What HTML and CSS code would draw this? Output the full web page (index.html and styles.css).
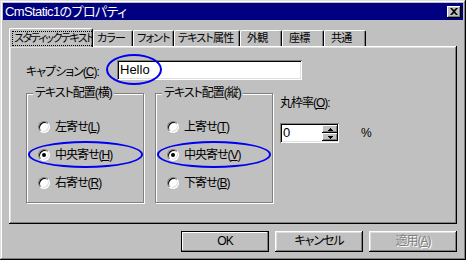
FILE: index.html
```html
<!DOCTYPE html>
<html lang="ja">
<head>
    <meta charset="UTF-8">
    <title>CmStatic1のプロパティ</title>
    <link rel="stylesheet" href="styles.css">
</head>
<body>
    <div class="window">
        <!-- タイトルバー -->
        <div class="titlebar">
            <span class="title">CmStatic1のプロパティ</span>
            <span class="close">
                <svg width="8" height="7" viewBox="0 0 8 7"><path d="M0 0h2l2 2 2-2h2L5 3.5 8 7H6L4 5 2 7H0l3-3.5z" fill="#000"/></svg>
            </span>
        </div>

        <div class="content">
            <div class="tabs">
                <div class="tab active"><span class="focus">スタティックテキスト</span></div>
                <div class="tab w-color">カラー</div>
                <div class="tab w-font">フォント</div>
                <div class="tab w-attr">テキスト属性</div>
                <div class="tab w-2">外観</div>
                <div class="tab w-2">座標</div>
                <div class="tab w-2">共通</div>
            </div>

            <div class="panel">
                <div class="caption-row">
                    <label class="caption-label">キャプション(<u>C</u>):</label>
                    <div class="field caption-field">Hello</div>
                </div>

                <div class="groups">
                    <fieldset class="group">
                        <legend>テキスト配置(横)</legend>
                        <div class="option"><span class="radio"></span>左寄せ(<u>L</u>)</div>
                        <div class="option"><span class="radio checked"></span>中央寄せ(<u>H</u>)</div>
                        <div class="option"><span class="radio"></span>右寄せ(<u>R</u>)</div>
                    </fieldset>
                    <fieldset class="group">
                        <legend>テキスト配置(縦)</legend>
                        <div class="option"><span class="radio"></span>上寄せ(<u>T</u>)</div>
                        <div class="option"><span class="radio checked"></span>中央寄せ(<u>V</u>)</div>
                        <div class="option"><span class="radio"></span>下寄せ(<u>B</u>)</div>
                    </fieldset>
                    <div class="round">
                        <div class="round-label">丸枠率(<u>O</u>):</div>
                        <div class="round-row">
                            <div class="field spin-field">
                                <span class="spin-value">0</span>
                                <span class="spin">
                                    <span class="spin-btn"><svg width="5" height="3" viewBox="0 0 5 3"><path d="M2 0h1v1h1v1h1v1H0V2h1V1h1z" fill="#000"/></svg></span>
                                    <span class="spin-btn"><svg width="5" height="3" viewBox="0 0 5 3"><path d="M0 0h5v1H4v1H3v1H2V2H1V1H0z" fill="#000"/></svg></span>
                                </span>
                            </div>
                            <span class="percent">%</span>
                        </div>
                    </div>
                </div>

                <!-- 青い丸印 -->
                <span class="mark mark-caption"></span>
                <span class="mark mark-h"></span>
                <span class="mark mark-v"></span>
            </div>

            <div class="buttons">
                <div class="btn default">OK</div>
                <div class="btn">キャンセル</div>
                <div class="btn disabled">適用(<u>A</u>)</div>
            </div>
        </div>
    </div>
</body>
</html>
```

FILE: styles.css
```css
body {
    margin: 0;
    background-color: #c0c0c0;
    font-family: "Liberation Sans", "Noto Sans CJK JP", sans-serif;
    font-size: 12px;
    font-feature-settings: "palt";
    letter-spacing: -1px;
    color: #000;
}
u {
    text-decoration-thickness: 1px;
    text-underline-offset: 1px;
}
.window {
    width: 466px;
    height: 260px;
    box-sizing: border-box;
    padding: 3px;
    background-color: #c0c0c0;
    box-shadow: inset -1px -1px #000, inset 1px 1px #dfdfdf, inset -2px -2px #808080, inset 2px 2px #fff;
}
/* タイトルバー */
.titlebar {
    height: 17px;
    background-color: #000080;
    color: #fff;
    display: flex;
    align-items: center;
    justify-content: space-between;
    padding: 0 2px 0 2px;
}
.title {
    font-size: 13px;
    letter-spacing: -0.6px;
    line-height: 17px;
}
.close {
    width: 14px;
    height: 12px;
    background-color: #c0c0c0;
    display: flex;
    align-items: center;
    justify-content: center;
    box-shadow: inset -1px -1px #000, inset 1px 1px #fff, inset -2px -2px #808080;
}
.content {
    padding: 8px 6px 0 6px;
}
/* タブ */
.tabs {
    display: flex;
    align-items: flex-end;
    height: 18px;
}
.tab {
    height: 16px;
    box-sizing: border-box;
    border-top: 1px solid #fff;
    border-left: 1px solid #fff;
    border-right: 1px solid #000;
    border-radius: 2px 2px 0 0;
    box-shadow: inset -1px 0 #808080;
    padding-left: 3px;
    font-size: 11px;
    letter-spacing: -0.8px;
    line-height: 14px;
    white-space: nowrap;
    overflow: hidden;
}
.tab.active {
    width: 84px;
    height: 19px;
    margin-bottom: -1px;
    position: relative;
    z-index: 1;
    background-color: #c0c0c0;
    padding: 2px 0 0 3px;
    letter-spacing: -1.5px;
}
.focus {
    display: inline-block;
    outline: 1px dotted #000;
    padding: 0 2px 0 1px;
    line-height: 13px;
}
.w-color { width: 40px; }
.w-font { width: 41px; }
.w-attr { width: 66px; }
.w-2 { width: 42px; padding-left: 6px; }
.panel {
    position: relative;
    height: 178px;
    box-sizing: border-box;
    padding: 14px 0 0 17px;
    box-shadow: inset -1px -1px #000, inset 1px 1px #fff, inset -2px -2px #808080, inset 2px 2px #dfdfdf;
}
.caption-row {
    display: flex;
    align-items: center;
}
.caption-label {
    width: 91px;
}
.field {
    background-color: #fff;
    box-sizing: border-box;
    box-shadow: inset 1px 1px #808080, inset -1px -1px #fff, inset 2px 2px #000, inset -2px -2px #dfdfdf;
}
.caption-field {
    width: 185px;
    height: 20px;
    line-height: 20px;
    padding-left: 3px;
    font-size: 13px;
    letter-spacing: 0;
}
/* グループ */
.groups {
    display: flex;
    margin-top: 6px;
}
.group {
    width: 118px;
    height: 117px;
    box-sizing: border-box;
    margin: 0 11px 0 0;
    padding: 0;
    border: 1px solid #808080;
    box-shadow: inset 1px 1px #fff, 1px 1px #fff;
}
.group legend {
    padding: 0 2px;
    margin-left: 6px;
    line-height: 14px;
    background-color: #c0c0c0;
}
.option {
    display: flex;
    align-items: center;
    height: 28px;
    padding-left: 11px;
    line-height: 14px;
}
.option:first-of-type {
    margin-top: 13px;
}
.radio {
    width: 12px;
    height: 12px;
    box-sizing: border-box;
    border-radius: 50%;
    background-color: #fff;
    border: 1px solid;
    border-color: #808080 #fff #fff #808080;
    box-shadow: inset 1px 1px #000, inset -1px -1px #dfdfdf;
    margin-right: 5px;
    display: flex;
    align-items: center;
    justify-content: center;
}
.radio.checked::after {
    content: "";
    width: 4px;
    height: 4px;
    border-radius: 50%;
    background-color: #000;
}
/* 丸枠率 */
.round {
    margin-left: -4px;
    padding-top: 10px;
}
.round-label {
    line-height: 14px;
}
.round-row {
    display: flex;
    align-items: center;
    margin-top: 13px;
}
.spin-field {
    width: 59px;
    height: 20px;
    display: flex;
    justify-content: space-between;
    padding: 2px 1px 2px 2px;
}
.spin-value {
    line-height: 16px;
    padding-left: 1px;
    font-size: 13px;
}
.spin {
    display: flex;
    flex-direction: column;
    width: 16px;
}
.spin-btn {
    flex: 1;
    background-color: #c0c0c0;
    display: flex;
    align-items: center;
    justify-content: center;
    box-shadow: inset -1px -1px #000, inset 1px 1px #fff, inset -2px -2px #808080;
}
.percent {
    margin-left: 22px;
}
/* 青い丸印 */
.mark {
    position: absolute;
    box-sizing: border-box;
    border: 2px solid #0000f0;
    border-radius: 50%;
}
.mark-caption {
    left: 97px;
    top: 8px;
    width: 56px;
    height: 31px;
}
.mark-h {
    left: 19px;
    top: 95px;
    width: 115px;
    height: 27px;
}
.mark-v {
    left: 148px;
    top: 95px;
    width: 114px;
    height: 27px;
}
/* ボタン */
.buttons {
    display: flex;
    justify-content: flex-end;
    gap: 6px;
    margin-top: 7px;
}
.btn {
    width: 88px;
    height: 21px;
    box-sizing: border-box;
    text-align: center;
    line-height: 21px;
    box-shadow: inset -1px -1px #000, inset 1px 1px #fff, inset -2px -2px #808080, inset 2px 2px #dfdfdf;
}
.btn.default {
    box-shadow: inset 0 0 0 1px #000, inset -2px -2px #808080, inset 2px 2px #fff;
}
.btn.disabled {
    color: #808080;
    text-shadow: 1px 1px #fff;
}
```
